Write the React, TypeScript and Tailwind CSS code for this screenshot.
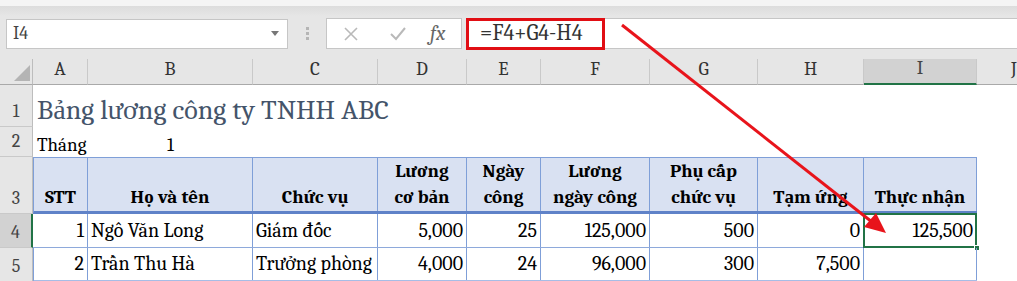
import React from 'react';

const colW = ['w-[55px]', 'w-[165px]', 'w-[125px]', 'w-[89px]', 'w-[74px]', 'w-[109px]', 'w-[108px]', 'w-[106px]', 'w-[113px]'];
const letters = ['A', 'B', 'C', 'D', 'E', 'F', 'G', 'H', 'I'];

function RowHead({ n, h, selected }: { n: string; h: string; selected?: boolean }) {
  return (
    <div
      className={`${h} w-[33px] shrink-0 flex items-end justify-center pb-[1px] text-[18px] text-[#444] border-b border-[#c9c9c9] ${
        selected ? 'bg-[#d2d2d2] border-r-2 border-r-[#217346]' : 'bg-[#e6e6e6] border-r border-r-[#bdbdbd]'
      }`}
    >
      {n}
    </div>
  );
}

const hdr = ['STT', 'Họ và tên', 'Chức vụ', 'Lương\ncơ bản', 'Ngày\ncông', 'Lương\nngày công', 'Phụ cấp\nchức vụ', 'Tạm ứng', 'Thực nhận'];

const data = [
  ['1', 'Ngô Văn Long', 'Giám đốc', '5,000', '25', '125,000', '500', '0', '125,500'],
  ['2', 'Trần Thu Hà', 'Trưởng phòng', '4,000', '24', '96,000', '300', '7,500', ''],
];

export default function App() {
  return (
    <div className="relative w-[1017px] h-[281px] overflow-hidden bg-[#e6e6e6] font-serif font-[family-name:Liberation_Serif,serif]">
      {/* title bar remnant */}
      <div className="h-[6px] bg-[#f4f4f4]" />
      <div className="h-[10px] bg-gradient-to-b from-[#dcdcdc] to-[#e6e6e6]" />

      {/* formula bar */}
      <div className="flex items-center h-[34px] pt-[1px]">
        <div className="ml-[6px] w-[282px] h-[30px] bg-white border border-[#c6c6c6] flex items-center justify-between px-[6px]">
          <span className="text-[18px] text-[#444]">I4</span>
          <svg width="8" height="5" viewBox="0 0 8 5" className="mr-[2px]">
            <path d="M0 0 L8 0 L4 5 Z" fill="#777" />
          </svg>
        </div>
        <div className="w-[38px] flex flex-col items-center gap-[2px]">
          <span className="w-[3px] h-[3px] bg-[#b5b5b5]" />
          <span className="w-[3px] h-[3px] bg-[#b5b5b5]" />
          <span className="w-[3px] h-[3px] bg-[#b5b5b5]" />
        </div>
        <div className="w-[136px] h-[31px] bg-white border border-[#c6c6c6] flex items-center">
          <svg width="16" height="16" viewBox="0 0 16 16" className="ml-[16px]">
            <path d="M2 2 L14 14 M14 2 L2 14" stroke="#b9b9b9" strokeWidth="1.6" />
          </svg>
          <svg width="18" height="16" viewBox="0 0 18 16" className="ml-[30px]">
            <path d="M2 8 L7 13 L16 2" stroke="#b9b9b9" strokeWidth="2" fill="none" />
          </svg>
          <span className="ml-[23px] italic text-[21px] text-[#666] leading-none">fx</span>
        </div>
        <div className="ml-[4px] flex-1 h-[31px] bg-white border-y border-[#c6c6c6] flex items-center">
          <div className="relative w-[139px] h-[32px] border-[3px] border-[#e10e14] flex items-center pl-[11px] text-[22px] text-[#333]">
            =F4+G4-H4
          </div>
        </div>
      </div>

      <div className="h-[9px]" />

      {/* column headers */}
      <div className="flex h-[26px]">
        <div className="w-[33px] shrink-0 relative border-r border-[#bdbdbd] border-b border-b-[#a9a9a9]">
          <svg width="16" height="16" viewBox="0 0 16 16" className="absolute right-[2px] bottom-[3px]">
            <path d="M16 0 L16 16 L0 16 Z" fill="#b4b4b4" />
          </svg>
        </div>
        {letters.map((l, i) => (
          <div
            key={l}
            className={`${colW[i]} shrink-0 flex items-end justify-center pb-[1px] text-[19px] border-r border-[#c9c9c9] ${
              l === 'I' ? 'bg-[#d2d2d2] text-[#444] border-b-2 border-b-[#217346]' : 'text-[#333] border-b border-b-[#a9a9a9]'
            }`}
          >
            {l}
          </div>
        ))}
        <div className="flex-1 flex items-end pl-[34px] pb-[1px] text-[19px] text-[#333] border-b border-b-[#a9a9a9]">J</div>
      </div>

      {/* row 1 */}
      <div className="flex h-[42px]">
        <RowHead n="1" h="h-[42px]" />
        <div className="flex-1 bg-white flex items-end pl-[4px] pb-[3px] text-[28px] text-[#44546a] leading-none whitespace-nowrap">
          Bảng lương công ty TNHH ABC
        </div>
      </div>

      {/* row 2 */}
      <div className="flex h-[30px]">
        <RowHead n="2" h="h-[30px]" />
        <div className="flex-1 bg-white flex items-end pb-[2px] text-[19px] text-black leading-none">
          <div className="w-[55px] pl-[4px] whitespace-nowrap">Tháng</div>
          <div className="w-[165px] text-center">1</div>
        </div>
      </div>

      {/* row 3 header */}
      <div className="flex h-[57px]">
        <RowHead n="3" h="h-[57px]" />
        <div className="flex bg-[#d9e1f2] border-t border-[#7f9fd8] border-b-[3px] border-b-[#5f82c8] border-l border-l-[#7f9fd8]">
          {hdr.map((t, i) => (
            <div
              key={i}
              className={`${i === 0 ? 'w-[54px]' : colW[i]} shrink-0 flex items-end justify-center text-center pb-[1px] font-bold text-[19px] leading-[26px] text-black whitespace-pre border-r border-[#7f9fd8]`}
            >
              {t}
            </div>
          ))}
        </div>
        <div className="flex-1 bg-white" />
      </div>

      {/* data rows */}
      {data.map((r, ri) => (
        <div key={ri} className="flex h-[34px]">
          <RowHead n={String(ri + 4)} h="h-[34px]" selected={ri === 0} />
          <div
            className={`flex bg-white ${ri === 0 ? 'border-b border-[#8ea9db]' : 'border-b-2 border-[#a6bde6] border-l border-l-[#7f9fd8]'}`}
          >
            {r.map((v, i) => (
              <div
                key={i}
                className={`${i === 0 && ri === 1 ? 'w-[54px]' : colW[i]} relative shrink-0 flex items-end pb-[1px] px-[3px] text-[20px] text-black whitespace-nowrap border-r border-[#7f9fd8] ${
                  i === 1 || i === 2 ? 'justify-start' : 'justify-end'
                }`}
              >
                {v}
                {ri === 0 && i === 8 && (
                  <>
                    <div className="absolute -left-px -top-px -right-px -bottom-px border-2 border-[#217346]" />
                    <div className="absolute -right-[4px] -bottom-[4px] w-[6px] h-[6px] bg-[#217346] border border-white" />
                  </>
                )}
              </div>
            ))}
          </div>
          <div className="flex-1 bg-white" />
        </div>
      ))}

      {/* arrow */}
      <svg className="absolute left-0 top-0 pointer-events-none" width="1017" height="281" viewBox="0 0 1017 281">
        <line x1="622" y1="25" x2="872" y2="222" stroke="#e8141b" strokeWidth="3" />
        <path d="M886 233 L864 227 L876 213 Z" fill="#e8141b" />
      </svg>
    </div>
  );
}
